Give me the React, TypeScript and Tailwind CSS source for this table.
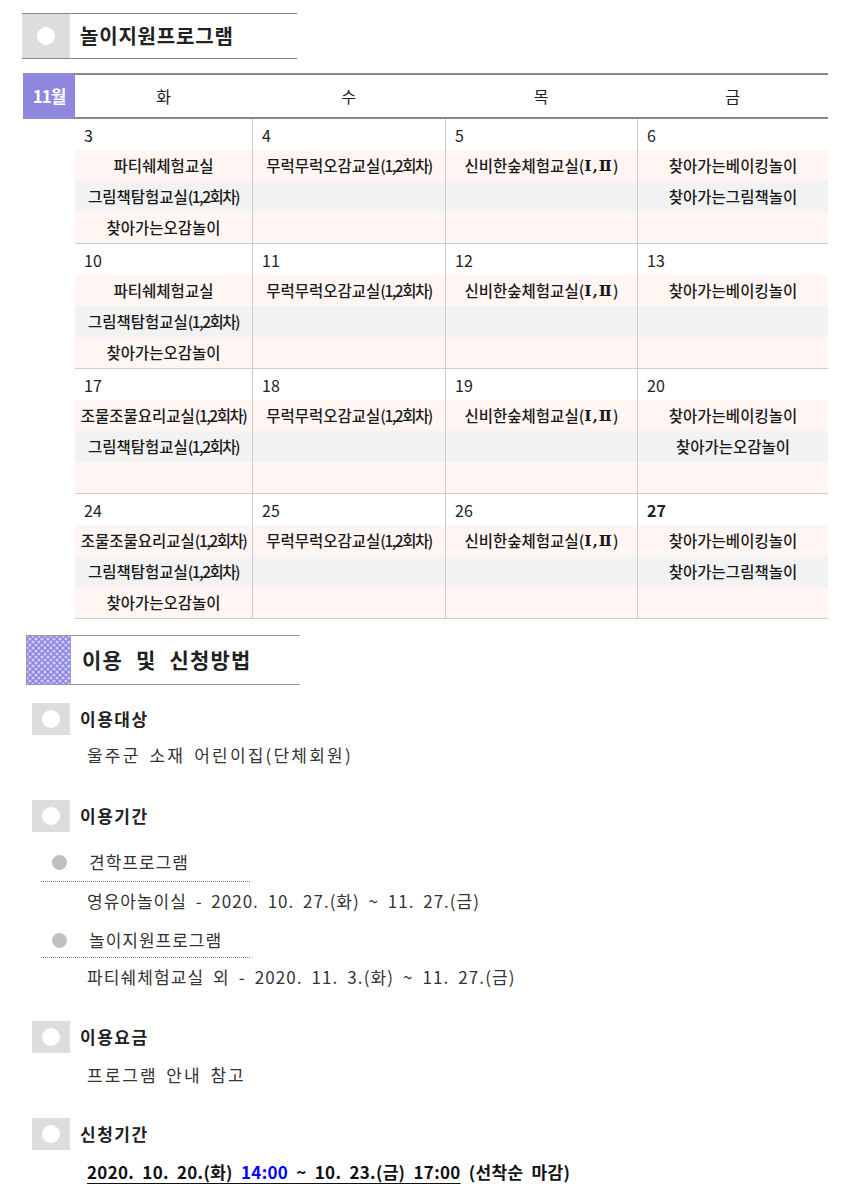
import type { ReactNode } from 'react';

type Day = { date: string; bold?: boolean; events: string[] };

const weeks: Day[][] = [
  [
    { date: '3', events: ['파티쉐체험교실', '그림책탐험교실(1,2회차)', '찾아가는오감놀이'] },
    { date: '4', events: ['무럭무럭오감교실(1,2회차)'] },
    { date: '5', events: ['신비한숲체험교실(Ⅰ,Ⅱ)'] },
    { date: '6', events: ['찾아가는베이킹놀이', '찾아가는그림책놀이'] },
  ],
  [
    { date: '10', events: ['파티쉐체험교실', '그림책탐험교실(1,2회차)', '찾아가는오감놀이'] },
    { date: '11', events: ['무럭무럭오감교실(1,2회차)'] },
    { date: '12', events: ['신비한숲체험교실(Ⅰ,Ⅱ)'] },
    { date: '13', events: ['찾아가는베이킹놀이'] },
  ],
  [
    { date: '17', events: ['조물조물요리교실(1,2회차)', '그림책탐험교실(1,2회차)'] },
    { date: '18', events: ['무럭무럭오감교실(1,2회차)'] },
    { date: '19', events: ['신비한숲체험교실(Ⅰ,Ⅱ)'] },
    { date: '20', events: ['찾아가는베이킹놀이', '찾아가는오감놀이'] },
  ],
  [
    { date: '24', events: ['조물조물요리교실(1,2회차)', '그림책탐험교실(1,2회차)', '찾아가는오감놀이'] },
    { date: '25', events: ['무럭무럭오감교실(1,2회차)'] },
    { date: '26', events: ['신비한숲체험교실(Ⅰ,Ⅱ)'] },
    { date: '27', bold: true, events: ['찾아가는베이킹놀이', '찾아가는그림책놀이'] },
  ],
];

const bands = ['bg-[#fff6f3]', 'bg-[#f2f2f2]', 'bg-[#fff6f3]'];

// squeeze the "(1,2회차)" part like the original page
function EventText({ text }: { text: string }) {
  const i = text.indexOf('(');
  if (i < 0) return <>{text}</>;
  if (text.includes('Ⅰ')) {
    return (
      <>
        {text.slice(0, i)}(
        <span className="font-bold tracking-[1px]" style={{ fontFamily: '"DejaVu Serif", "Liberation Serif", serif' }}>
          Ⅰ,Ⅱ
        </span>
        )
      </>
    );
  }
  return (
    <>
      {text.slice(0, i)}
      <span className="tracking-[-1.5px]">{text.slice(i)}</span>
    </>
  );
}

function Dot({ box }: { box: string }) {
  return (
    <div className={`flex items-center justify-center bg-[#dddddd] ${box}`}>
      <div className="w-[18px] h-[18px] rounded-full bg-white" />
    </div>
  );
}

function SubTitle({ children }: { children: ReactNode }) {
  return (
    <div className="flex items-center ml-[32px]">
      <Dot box="w-[38px] h-[32px]" />
      <span className="ml-[10px] text-[17px] font-bold tracking-[1.5px] text-[#222]">{children}</span>
    </div>
  );
}

export default function App() {
  return (
    <div
      className="w-[843px] bg-white text-[#222] pt-[13px] pb-[20px]"
      style={{ fontFamily: '"Noto Sans CJK KR", "Liberation Sans", sans-serif' }}
    >
      <div className="ml-[22px] w-[275px] flex items-center border-t border-b border-[#888]">
        <Dot box="w-[48px] h-[44px]" />
        <span className="ml-[10px] text-[20px] font-bold tracking-[0.8px] leading-none">놀이지원프로그램</span>
      </div>

      <div className="mt-[14px] ml-[23px] flex">
        <div className="w-[52px] h-[46px] bg-[#8f86dd] flex items-center justify-center text-white text-[17px] font-bold tracking-[-1px]">
          11월
        </div>
        <div className="w-[753px]">
          <div className="grid grid-cols-[177px_193px_192px_191px] h-[46px] border-t-2 border-b-2 border-[#888] text-[16px]">
            {['화', '수', '목', '금'].map((d) => (
              <div key={d} className="flex items-center justify-center">{d}</div>
            ))}
          </div>
          {weeks.map((week, wi) => (
            <div key={wi} className="grid grid-cols-[177px_193px_192px_191px] border-b border-[#cccccc]">
              {week.map((day, di) => (
                <div key={day.date} className={di > 0 ? 'border-l border-[#cccccc]' : ''}>
                  <div className={`h-[31px] flex items-center pl-[9px] text-[16px] ${day.bold ? 'font-bold' : ''}`}>
                    {day.date}
                  </div>
                  {bands.map((bg, bi) => (
                    <div
                      key={bi}
                      className={`h-[31px] flex items-center justify-center text-[15.5px] font-medium text-[#1a1a1a] whitespace-nowrap ${bg}`}
                    >
                      {day.events[bi] ? <EventText text={day.events[bi]} /> : null}
                    </div>
                  ))}
                </div>
              ))}
            </div>
          ))}
        </div>
      </div>

      <div className="mt-[16px] ml-[26px] w-[274px] flex items-center border-t border-b border-[#999]">
        <svg width="45" height="48" className="border-l border-[#999]">
          <defs>
            <pattern id="chk" width="6" height="6" patternUnits="userSpaceOnUse">
              <rect width="6" height="6" fill="#8c85e6" />
              <circle cx="0" cy="0" r="1.6" fill="#d2cef7" />
              <circle cx="6" cy="0" r="1.6" fill="#d2cef7" />
              <circle cx="0" cy="6" r="1.6" fill="#d2cef7" />
              <circle cx="6" cy="6" r="1.6" fill="#d2cef7" />
              <circle cx="3" cy="3" r="1.6" fill="#d2cef7" />
            </pattern>
          </defs>
          <rect width="45" height="48" fill="url(#chk)" />
        </svg>
        <span className="ml-[11px] text-[21px] font-bold tracking-[1.2px] [word-spacing:7px]">이용 및 신청방법</span>
      </div>

      <div className="mt-[18px]">
        <SubTitle>이용대상</SubTitle>
        <p className="mt-[8px] ml-[87px] text-[17px] leading-[24px] tracking-[2.2px] [word-spacing:3px] text-[#333]">
          울주군 소재 어린이집(단체회원)
        </p>
      </div>

      <div className="mt-[33px]">
        <SubTitle>이용기간</SubTitle>
        <div className="mt-[18px] ml-[41px] w-[209px] border-b border-dotted border-[#777] pb-[7px] flex items-center">
          <span className="ml-[11px] w-[15px] h-[15px] rounded-full bg-[#c0c0c0]" />
          <span className="ml-[22px] text-[17px] leading-[24px] tracking-[1px] text-[#333]">견학프로그램</span>
        </div>
        <p className="mt-[7px] ml-[87px] text-[17px] leading-[24px] tracking-[1px] [word-spacing:4px] text-[#333]">
          영유아놀이실 - 2020. 10. 27.(화) ~ 11. 27.(금)
        </p>
        <div className="mt-[15px] ml-[41px] w-[209px] border-b border-dotted border-[#777] pb-[5px] flex items-center">
          <span className="ml-[11px] w-[15px] h-[15px] rounded-full bg-[#c0c0c0]" />
          <span className="ml-[22px] text-[17px] leading-[24px] tracking-[1px] text-[#333]">놀이지원프로그램</span>
        </div>
        <p className="mt-[7px] ml-[87px] text-[17px] leading-[24px] tracking-[1.1px] [word-spacing:4px] text-[#333]">
          파티쉐체험교실 외 - 2020. 11. 3.(화) ~ 11. 27.(금)
        </p>
      </div>

      <div className="mt-[32px]">
        <SubTitle>이용요금</SubTitle>
        <p className="mt-[10px] ml-[87px] text-[17px] leading-[24px] tracking-[2px] [word-spacing:3px] text-[#333]">
          프로그램 안내 참고
        </p>
      </div>

      <div className="mt-[31px]">
        <SubTitle>신청기간</SubTitle>
        <p className="mt-[10px] ml-[87px] text-[17px] leading-[24px] font-bold tracking-[0.3px] [word-spacing:4px] text-[#111]">
          <span className="underline underline-offset-[4px]">
            2020. 10. 20.(화) <span className="text-[#0000ff]">14:00</span> ~ 10. 23.(금) 17:00
          </span>{' '}
          (선착순 마감)
        </p>
      </div>
    </div>
  );
}
